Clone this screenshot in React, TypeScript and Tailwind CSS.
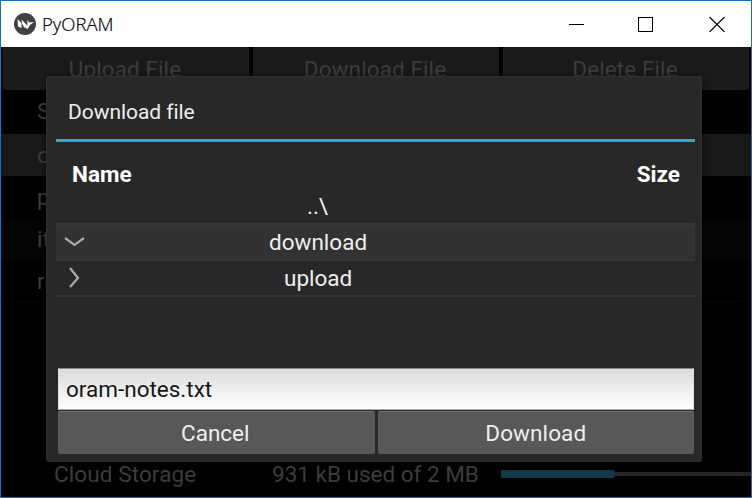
const files = [
  { name: 'S', row: 'h-[44px] bg-black' },
  { name: 'o', row: 'h-[42px] bg-[#181818]' },
  { name: 'p', row: 'h-[42px] bg-black' },
  { name: 'it', row: 'h-[42px] bg-[#040404]' },
  { name: 're', row: 'h-[42px] bg-black border-b border-[#060606]' },
];

function Logo() {
  return (
    <svg width="22" height="22" viewBox="0 0 22 22">
      <circle cx="11" cy="11" r="11" fill="#3f4143" />
      <path d="M3.5 6 L7.5 10 L7.5 15 L4 13.5 Z M7.5 6.5 L12.8 12 L10.5 15 L8.3 11 Z M13.2 7 L15 9.5 L20 9 L16 12 L13.5 16 L11 14.5 L13.5 11.5 Z" fill="#fff" />
    </svg>
  );
}

function TitleBar() {
  return (
    <header className="flex h-[46px] shrink-0 items-center bg-white pl-[13px]">
      <Logo />
      <span className="ml-[6px] font-['Open_Sans','Noto_Sans',sans-serif] text-[18.5px] font-light leading-6 tracking-[0px] text-black [-webkit-text-stroke:0.2px_#000]">PyORAM</span>
      <svg className="mb-px ml-auto mr-[26px]" width="156" height="16" viewBox="0 0 156 16" fill="none" stroke="#000" shapeRendering="crispEdges">
        <path d="M0 8.5H15" />
        <rect x="69.5" y="1.5" width="14" height="14" />
        <path d="M140.5 1L155.5 16M155.5 1L140.5 16" shapeRendering="auto" strokeWidth="1.1" />
      </svg>
    </header>
  );
}

function Main() {
  return (
    <main className="flex flex-1 flex-col bg-black text-[22.5px] text-[#3c3c3c]">
      <div className="flex h-[43px] gap-1 px-[2px] text-center leading-[45px]">
        {['Upload File', 'Download File', 'Delete File'].map((label) => (
          <button key={label} className="flex-1 rounded-[2px] bg-[#1a1a1a] pr-[2px] tracking-[0.1px]">{label}</button>
        ))}
      </div>
      {files.map((f) => (
        <div key={f.name} className={`pl-9 leading-[42px] ${f.row}`}>{f.name}</div>
      ))}
      <footer className="mt-auto flex h-[46px] items-center pl-[53px]">
        <span className="w-[218px] pt-[2px] tracking-[0.1px]">Cloud Storage</span>
        <span className="w-[229px] pt-[2px]">931 kB used of 2 MB</span>
        <span className="h-2 w-[114px] rounded-r-[3px] bg-[#12394a]" />
        <span className="h-1 flex-1 bg-[#262626]" />
      </footer>
    </main>
  );
}

function Dialog() {
  return (
    <section className="absolute left-[45px] top-[75px] flex h-[386px] w-[656px] flex-col rounded-[3px] border border-[#303030] bg-[#282828] pl-[9px] pr-[6px] text-[22.5px] text-[#eee] shadow-[0_0_5px_#0008]">
      <h1 className="h-[62px] pl-3 pt-[2px] text-[21px] leading-[66px] tracking-[-0.05px]">Download file</h1>
      <div className="h-[3px] shrink-0 bg-[#2fa7d4]" />
      <div className="flex h-[50px] justify-between pl-4 pr-[15px] font-bold leading-[64px] text-white">
        <span>Name</span>
        <span>Size</span>
      </div>
      <div className="h-[31px] pl-[251px] leading-[28px]">..\</div>
      <div className="flex h-[38px] border-y-2 border-[#373737] bg-[#323232] leading-[34px]">
        <svg className="ml-2 mt-[10px]" width="22" height="14" viewBox="0 0 22 14" fill="none" stroke="#aaa" strokeWidth="2.2">
          <path d="M1 3L10.500 10L20 3" />
        </svg>
        <span className="ml-[183px]">download</span>
      </div>
      <div className="flex h-[36px] border-b-2 border-[#333] leading-[34px]">
        <svg className="ml-2 mt-[6px]" width="22" height="22" viewBox="0 0 22 22" fill="none" stroke="#aaa" strokeWidth="2.2">
          <path d="M6 1L14 11L6 20" />
        </svg>
        <span className="ml-[198px]">upload</span>
      </div>
      <div className="ml-[2px] mr-px mt-auto h-[42px] border border-t-[#888] border-x-[#ddd] border-b-[#aaa] bg-linear-to-b from-[#dcdcdc] to-white pl-[7px] leading-[40px] text-[#171717]">oram-notes.txt</div>
      <div className="mb-[7px] ml-[2px] mr-px mt-[1px] grid h-[43px] grid-cols-2 gap-[3px] leading-[42px]">
        <button className="rounded-[2px] border-t border-[#777] bg-[#585858] pr-[2px]">Cancel</button>
        <button className="rounded-[2px] border-t border-[#777] bg-[#585858] tracking-[0.1px]">Download</button>
      </div>
    </section>
  );
}

export default function App() {
  return (
    <div className="relative flex h-[498px] w-[752px] flex-col overflow-hidden border border-[#1a70b8] font-[Roboto,sans-serif]">
      <TitleBar />
      <Main />
      <Dialog />
    </div>
  );
}
